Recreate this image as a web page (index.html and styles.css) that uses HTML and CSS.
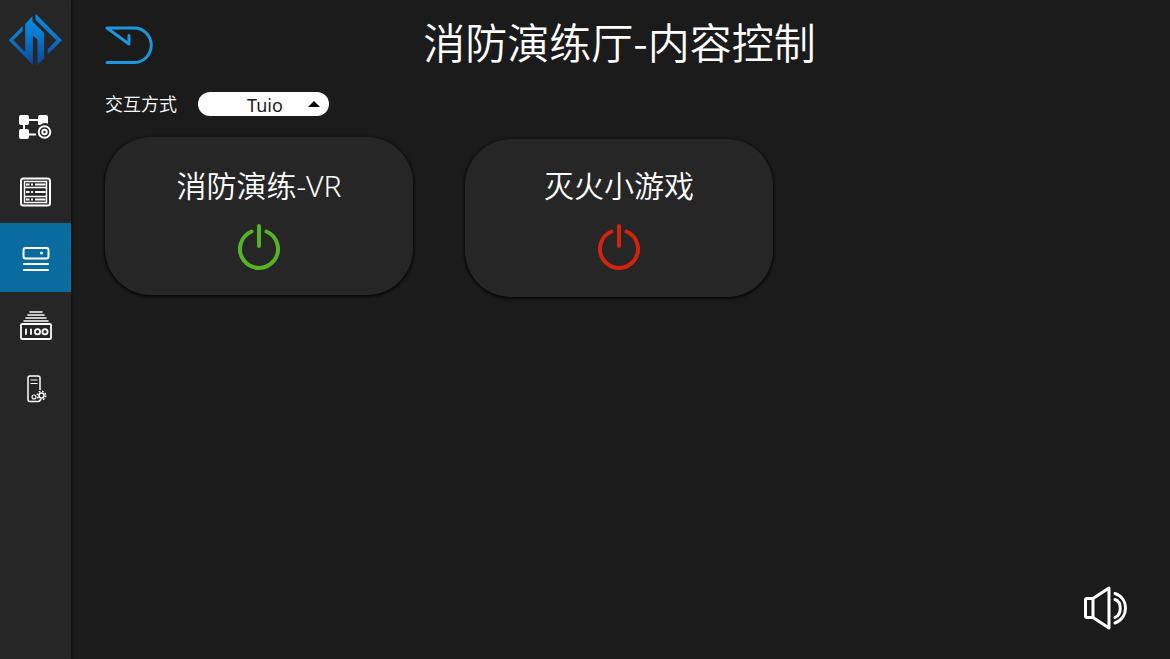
FILE: index.html
```html
<!DOCTYPE html>
<html lang="zh-CN">
<head>
<meta charset="utf-8">
<meta name="viewport" content="width=device-width, initial-scale=1">
<title>消防演练厅-内容控制</title>
<link rel="stylesheet" href="styles.css">
</head>
<body>
<div class="app">
  <aside class="sidebar">
    <svg class="logo" viewBox="24 40 166 160" role="img" aria-label="Logo">
      <defs>
        <linearGradient id="brand" gradientUnits="userSpaceOnUse" x1="100" y1="42" x2="110" y2="197">
          <stop offset="0" stop-color="#0a8be0"/>
          <stop offset="0.4" stop-color="#0a7cd0"/>
          <stop offset="1" stop-color="#0b4594"/>
        </linearGradient>
      </defs>
      <g fill="url(#brand)">
        <path d="M68 79V94L40 122L76 158V73L98 49V66L133 100V177L113 197V121L99 108V197L26 122Z"/>
        <path d="M107 42L187 122L144 165V149L170 122L107 60Z"/>
      </g>
    </svg>
    <nav class="nav" aria-label="主导航">
      <button class="nav-item" type="button" aria-label="拓扑设置">
        <svg width="34" height="26" viewBox="0 0 34 26" fill="#fff">
          <rect x="0" y="1" width="10" height="10" rx="2"/><rect x="0" y="15" width="10" height="10" rx="2"/>
          <path d="M21 1h6a2 2 0 0 1 2 2v6.500a8 8 0 0 0-8 1.500h-1a1 1 0 0 1-1-1V3a2 2 0 0 1 2-2z"/>
          <path d="M9 6h11M5 10v6M9 20.500h8" stroke="#fff" stroke-width="2"/>
          <circle cx="25.500" cy="18" r="5.800" fill="none" stroke="#fff" stroke-width="2"/>
          <circle cx="25.500" cy="18" r="2.200" fill="none" stroke="#fff" stroke-width="2"/>
        </svg>
      </button>
      <button class="nav-item" type="button" aria-label="设备列表">
        <svg width="32" height="30" viewBox="0 0 32 30" fill="none" stroke="#fff">
          <rect x="1" y="1.500" width="29" height="27" rx="2.500" stroke-width="2"/>
          <path d="M4.500 4.500h22v21h-22zM4.500 10.500h22M4.500 19.500h22" stroke-width="1.500"/>
          <path d="M6 7.500h3.500M11 7.500h2M15 7.500h10.500M6 15h3.500M11 15h2M15 15h10.500M6 22.500h3.500M11 22.500h2M15 22.500h10.500" stroke-width="2"/>
        </svg>
      </button>
      <button class="nav-item nav-item--active" type="button" aria-label="内容控制" aria-current="page">
        <svg width="28" height="26" viewBox="0 0 28 26" fill="none" stroke="#fff" stroke-width="2" stroke-linecap="round">
          <rect x="1.500" y="2" width="25" height="10.500" rx="2"/>
          <path d="M2 18h24M2 24h24"/><circle cx="19.500" cy="7" r="1.500" fill="#fff" stroke="none"/>
        </svg>
      </button>
      <button class="nav-item" type="button" aria-label="数据">
        <svg width="32" height="32" viewBox="0 0 32 32" fill="none" stroke="#fff" stroke-linecap="round">
          <path d="M10 2h12M8 5h16M6 8h20M4 11h24" stroke-width="1.600"/>
          <rect x="1" y="14" width="30" height="15" rx="1" stroke-width="1.800"/>
          <path d="M6 19.500v4.500M11 19.500v4.500" stroke-width="1.800"/>
          <circle cx="17.500" cy="21.700" r="2.600" stroke-width="1.800"/><circle cx="25" cy="21.700" r="2.600" stroke-width="1.800"/>
        </svg>
      </button>
      <button class="nav-item nav-item--host" type="button" aria-label="主机设置">
        <svg width="20" height="28" viewBox="0 0 20 28" fill="none" stroke="#fff">
          <path d="M13 15V3A2 2 0 0 0 11 1H3A2 2 0 0 0 1 3V24.500A2 2 0 0 0 3 26.500H11Q13 26.500 13 25" stroke-width="1.500"/>
          <path d="M3.500 5h7M3.500 8.500h7" stroke-width="1.200"/>
          <circle cx="7" cy="22" r="2" stroke-width="1.100"/>
          <circle cx="14.500" cy="20.500" r="2.500" stroke-width="1.500"/>
          <circle cx="14.500" cy="20.500" r="4.200" stroke-width="1.600" stroke-dasharray="1.650 1.650"/>
        </svg>
      </button>
    </nav>
  </aside>

  <main class="main">
    <header class="header">
      <button class="back" type="button" aria-label="返回">
        <svg width="48" height="39" viewBox="0 0 48 39" fill="none" stroke="#1c96dc" stroke-width="3" stroke-linecap="round" stroke-linejoin="round">
          <path d="M24 9.500V18L2 2H29A17.250 17.250 0 0 1 29 36.500H2"/>
        </svg>
      </button>
      <h1 class="title">消防演练厅-内容控制</h1>
    </header>

    <div class="filter">
      <label class="filter-label" for="mode">交互方式</label>
      <span class="select">
        <select id="mode"><option>Tuio</option></select>
        <svg class="select-arrow" width="12" height="6" viewBox="0 0 12 6" aria-hidden="true"><path d="M0 6L6 0L12 6Z"/></svg>
      </span>
    </div>

    <section class="cards">
      <article class="card">
        <h2 class="card-title">消防演练-VR</h2>
        <button class="power power--on" type="button" aria-label="消防演练-VR 电源">
          <svg width="44" height="48" viewBox="0 0 44 48" fill="none" stroke="currentColor" stroke-width="4" stroke-linecap="round"><path d="M22 3V23M14.500 8.500A19 19 0 1 0 29.500 8.500"/></svg>
        </button>
      </article>
      <article class="card card--off">
        <h2 class="card-title">灭火小游戏</h2>
        <button class="power power--off" type="button" aria-label="灭火小游戏 电源">
          <svg width="44" height="48" viewBox="0 0 44 48" fill="none" stroke="currentColor" stroke-width="4" stroke-linecap="round"><path d="M22 3V23M14.500 8.500A19 19 0 1 0 29.500 8.500"/></svg>
        </button>
      </article>
    </section>

    <footer class="footer">
      <button class="volume" type="button" aria-label="音量">
        <svg width="46" height="44" viewBox="0 0 46 44" fill="none" stroke="#fff" stroke-width="3" stroke-linecap="round" stroke-linejoin="round">
          <path d="M10 12.500H4Q2.500 12.500 2.500 14V30Q2.500 31.500 4 31.500H10ZM10 12.500L26 2V42L10 31.500"/>
          <path d="M32 13.500C39 16 39 28 32 31.500M32 7.500C46 12 46 32 32 37"/>
        </svg>
      </button>
    </footer>
  </main>
</div>
</body>
</html>
```
FILE: styles.css
```css
* { box-sizing: border-box; }

body {
  margin: 0;
  background: #1b1b1b;
  color: #fff;
  font-family: "Open Sans", "Noto Sans CJK SC", sans-serif;
}

button {
  display: flex;
  align-items: center;
  justify-content: center;
  padding: 0;
  border: 0;
  background: none;
  color: inherit;
  cursor: pointer;
}

svg { display: block; }

h1, h2 { margin: 0; font-weight: 350; }

.app {
  display: flex;
  min-height: 100vh;
}

.sidebar {
  flex: none;
  width: 71px;
  padding-top: 13px;
  background: #262626;
  box-shadow: 1px 0 4px #0008;
}

.logo {
  width: 55px;
  height: 53px;
  margin: 0 auto 27px 8px;
}

.nav {
  display: flex;
  flex-direction: column;
}

.nav-item {
  width: 100%;
  height: 65px;
  padding-top: 2px;
}

.nav-item--active {
  height: 69px;
  background: #096b9e;
}

.nav-item--host {
  padding: 0 0 2px 3px;
}

.main {
  flex: 1;
  display: flex;
  flex-direction: column;
  min-width: 0;
  padding: 16px 36px 29px 34px;
}

.header {
  display: grid;
  grid-template-columns: 1fr auto 1fr;
  align-items: center;
}

.back {
  justify-self: start;
  padding-top: 2px;
}

.title {
  padding-bottom: 6px;
  font-family: "Noto Sans CJK SC", sans-serif;
  font-size: 42px;
  line-height: 50px;
}

.filter {
  display: flex;
  align-items: center;
  gap: 21px;
  margin-top: 20px;
}

.filter-label {
  font-size: 18px;
  line-height: 24px;
  font-weight: 350;
}

.select { position: relative; }

.select select {
  display: block;
  width: 131px;
  height: 24px;
  padding: 2px 0 0 3px;
  border: 0;
  border-radius: 12px;
  appearance: none;
  background: #fff;
  color: #1b1b1b;
  font-family: "Noto Sans", sans-serif;
  font-size: 18px;
  line-height: 22px;
  text-align: center;
  text-align-last: center;
}

.select-arrow {
  position: absolute;
  top: 9px;
  right: 9px;
  pointer-events: none;
}

.cards {
  display: flex;
  flex-wrap: wrap;
  align-items: flex-start;
  gap: 52px;
  margin-top: 21px;
}

.card {
  display: flex;
  flex-direction: column;
  align-items: center;
  width: 308px;
  padding: 29px 24px 24px;
  border-radius: 46px;
  background: #262626;
  box-shadow: 0 1px 3px 1px #000b;
}

.card--off {
  margin-top: 2px;
  padding: 27px 24px 26px;
}

.card-title {
  font-family: "Noto Sans", "Noto Sans CJK SC", sans-serif;
  font-size: 30px;
  line-height: 40px;
}

.power { margin-top: 17px; }
.power--on { color: #56b424; }
.power--off { color: #d1230d; }

.footer {
  display: flex;
  justify-content: flex-end;
  margin-top: auto;
  padding-right: 5px;
}
```
